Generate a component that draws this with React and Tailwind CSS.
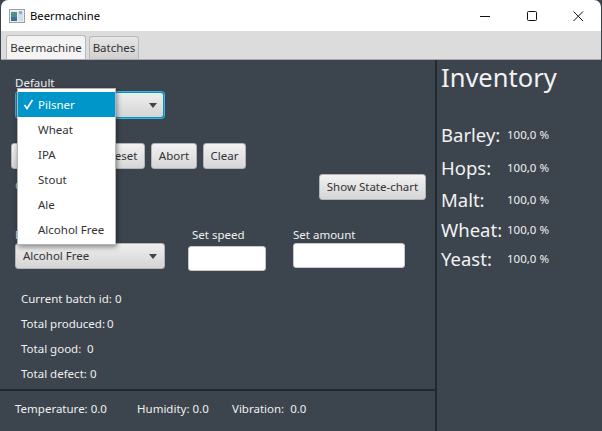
const FONT = "font-['Noto_Sans','Open_Sans',sans-serif]";

const btn = 'h-[26px] rounded-[3px] border border-[#b4b4b4] bg-gradient-to-b from-[#f2f2f2] to-[#d6d6d6] text-[11.5px] leading-none text-[#333] flex items-center justify-center shrink-0';
const combo = 'rounded-[3px] bg-gradient-to-b from-[#efefef] to-[#d4d4d4] flex items-center justify-between text-[11.5px] text-[#333]';

const OPTIONS = ['Wheat', 'IPA', 'Stout', 'Ale', 'Alcohol Free'];
const STATS = [
  ['Current batch id:', '0', 'w-[94px]'],
  ['Total produced:', '0', 'w-[86px]'],
  ['Total good:', '0', 'w-[66px]'],
  ['Total defect:', '0', 'w-[69px]'],
];
const INVENTORY = [
  ['Barley:', 'h-[33px]'],
  ['Hops:', 'h-[33px]'],
  ['Malt:', 'h-[31px]'],
  ['Wheat:', 'h-[29px]'],
  ['Yeast:', 'h-[29px]'],
];

function Caret() {
  return <span className="w-0 h-0 border-x-[4.5px] border-x-transparent border-t-[5px] border-t-[#444]" />;
}

function AppIcon() {
  return (
    <svg width="16" height="16" viewBox="0 0 16 16" className="shrink-0">
      <rect x="0.5" y="1.5" width="15" height="13" fill="#e9eef0" stroke="#9aa3a8" />
      <rect x="2" y="4" width="6" height="9" fill="#4f8f8a" />
      <rect x="2" y="9" width="6" height="4" fill="#3c6f96" />
      <rect x="9" y="4" width="5" height="9" fill="#d5dde0" />
      <rect x="10" y="3" width="3" height="3" fill="#8fb0c4" />
    </svg>
  );
}

function WindowButtons() {
  return (
    <div className="flex items-center text-black">
      <svg width="12" height="12" viewBox="0 0 12 12" className="mr-[35px]">
        <path d="M1 6.5h10" stroke="#111" strokeWidth="1" />
      </svg>
      <svg width="12" height="12" viewBox="0 0 12 12" className="mr-[34px]">
        <rect x="1.5" y="1.5" width="9" height="9" rx="1" fill="none" stroke="#111" />
      </svg>
      <svg width="12" height="12" viewBox="0 0 12 12" className="mr-[17px]">
        <path d="M1.5 1.5l9.5 9.5M11 1.5l-9.5 9.5" stroke="#111" strokeWidth="1" fill="none" />
      </svg>
    </div>
  );
}

export default function App() {
  return (
    <div className={`${FONT} relative w-[602px] h-[431px] overflow-hidden bg-[#3c444d] flex flex-col`}>
      {/* Title bar */}
      <div className="h-[31px] mx-px bg-white rounded-t-[7px] flex items-center justify-between pl-[8px] shrink-0">
        <div className="flex items-center gap-[5px] text-[11.25px] text-black">
          <AppIcon />
          <span className="pt-px">Beermachine</span>
        </div>
        <WindowButtons />
      </div>

      {/* Tabs */}
      <div className="h-[29px] mx-px bg-[#dcdcdc] border-b border-[#a9a9a9] flex items-end pl-[5px] gap-[3px] shrink-0 text-[11.5px] text-[#333]">
        <div className="h-[24px] w-[80px] bg-[#f4f4f4] border border-b-0 border-[#b9b9b9] rounded-t-[3px] flex items-center justify-center">Beermachine</div>
        <div className="h-[23px] w-[50px] bg-gradient-to-b from-[#e6e6e6] to-[#d0d0d0] border border-b-0 border-[#b9b9b9] rounded-t-[3px] flex items-center justify-center">Batches</div>
      </div>

      {/* Body */}
      <div className="flex-1 flex min-h-0 text-white">
        <div className="relative w-[435px] shrink-0 flex flex-col">
          <div className="flex-1 pl-[15px] text-[11.5px] text-[#f0f0f0]">
            <div className="h-[17px] mt-[14px] leading-[17px]">Default</div>

            {/* Selected type combo */}
            <div className={`${combo} w-[148px] h-[26px] ml-px mt-px pr-[6px] justify-end border border-[#0096c9] shadow-[0_0_0_1px_#39b4dc]`}>
              <Caret />
            </div>

            {/* Controls */}
            <div className="flex gap-[6px] mt-[25px] -ml-[4px]">
              <div className={`${btn} w-[41px]`}>Start</div>
              <div className={`${btn} w-[36px]`}>Stop</div>
              <div className={`${btn} w-[45px]`}>Reset</div>
              <div className={`${btn} w-[46px]`}>Abort</div>
              <div className={`${btn} w-[43px]`}>Clear</div>
            </div>

            {/* State row */}
            <div className="flex justify-between items-start mt-[5px] pr-[9px]">
              <span className="text-[#9fdc7c] mt-[3px]">Connected</span>
              <div className={`${btn} w-[107px]`}>Show State-chart</div>
            </div>

            {/* Batch settings */}
            <div className="flex items-start mt-[27px]">
              <div className="w-[173px]">
                <div className="h-[16px] leading-[16px] text-[#cfe6f5]">Batch</div>
                <div className={`${combo} w-[150px] h-[26px] border border-[#b4b4b4] pl-[7px] pr-[7px]`}>
                  <span>Alcohol Free</span>
                  <Caret />
                </div>
              </div>
              <div className="w-[105px]">
                <div className="h-[16px] leading-[16px] pl-[4px]">Set speed</div>
                <div className="w-[78px] h-[25px] mt-[3px] bg-white rounded-[3px] border border-[#c8c8c8]" />
              </div>
              <div>
                <div className="h-[16px] leading-[16px]">Set amount</div>
                <div className="w-[112px] h-[25px] bg-white rounded-[3px] border border-[#c8c8c8]" />
              </div>
            </div>

            {/* Batch stats */}
            <div className="flex flex-col mt-[15px] pl-[6px]">
              {STATS.map(([label, value, width]) => (
                <div key={label} className="h-[25px] flex items-center whitespace-nowrap">
                  <span className={width}>{label}</span>
                  <span>{value}</span>
                </div>
              ))}
            </div>
          </div>

          {/* Sensors */}
          <div className="h-[42px] pb-[5px] border-t-2 border-[#22292e] flex items-center pl-[15px] text-[11.5px] text-[#f0f0f0] shrink-0">
            <span className="w-[122px]">Temperature: 0.0</span>
            <span className="w-[95px]">Humidity: 0.0</span>
            <span>Vibration:&nbsp; 0.0</span>
          </div>

          {/* Open dropdown list */}
          <div className="absolute left-[17px] top-[28px] w-[99px] bg-white border border-[#b4b4b4] shadow-[1px_2px_5px_rgba(0,0,0,0.45)] text-[11.5px] text-[#333] pt-[3px] pb-[2px]">
            <div className="h-[25px] bg-[#0096c9] text-white flex items-center pl-[5px]">
              <svg width="11" height="11" viewBox="0 0 11 11" className="mr-[4px] shrink-0">
                <path d="M1.5 6l2.5 3.5L9.5 1" stroke="#fff" strokeWidth="1.7" fill="none" />
              </svg>
              <span>Pilsner</span>
            </div>
            {OPTIONS.map(o => (
              <div key={o} className="h-[25px] flex items-center pl-[20px]">{o}</div>
            ))}
          </div>
        </div>

        <div className="w-[2px] bg-[#22292e] shrink-0" />

        {/* Inventory */}
        <div className="flex-1 pl-[4px]">
          <div className="text-[25.5px] leading-[36px] -mt-px text-[#f2f2f2]">Inventory</div>
          <div className="mt-[23px]">
            {INVENTORY.map(([name, h]) => (
              <div key={name} className={`${h} flex items-center`}>
                <span className="w-[66px] text-[18.5px] text-[#f2f2f2]">{name}</span>
                <span className="text-[11.5px] text-[#f0f0f0]">100,0 %</span>
              </div>
            ))}
          </div>
        </div>
      </div>
    </div>
  );
}
